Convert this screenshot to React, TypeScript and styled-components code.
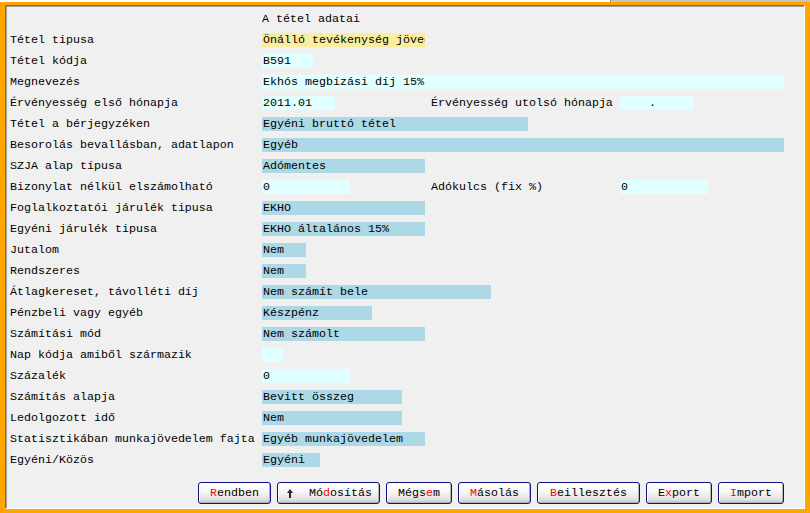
import styled, { createGlobalStyle } from "styled-components";

const GlobalStyle = createGlobalStyle`
  html, body {
    margin: 0;
    padding: 0;
    background: #ffffff;
  }
`;

const Page = styled.div`
  width: 810px;
  height: 513px;
  display: flex;
  flex-direction: column;
  overflow: hidden;
  font-family: "Liberation Mono", "Courier New", monospace;
  font-size: 11.67px;
  color: #000;
`;

const BackStrip = styled.div`
  height: 2px;
  display: flex;
  overflow: hidden;
`;

const BackTitle = styled.div`
  width: 600px;
  background: #ffffff;
  padding-left: 10px;
  line-height: 14px;
  margin-top: -12px;
  white-space: pre;
`;

const BackGray = styled.div`
  flex: 1;
  background: #c4c4c4;
  border-left: 1px solid #8a8a8a;
`;

const Window = styled.div`
  flex: 1;
  display: flex;
  border-style: solid;
  border-color: #ffa500;
  border-width: 3px 5px 4px 5px;
`;

const Panel = styled.div`
  flex: 1;
  display: flex;
  flex-direction: column;
  background: #f0f0f0;
  border-top: 1px solid #6e6e6e;
  border-left: 1px solid #6e6e6e;
  border-right: 1px solid #ffffff;
  border-bottom: 1px solid #ffffff;
  box-shadow: inset 1px 1px 0 #a0a0a0;
  padding: 2px 0 0 4px;
`;

const Row = styled.div<{ $pair?: boolean }>`
  display: grid;
  grid-template-columns: ${(p) => (p.$pair ? "252px 169px 189px 1fr" : "252px 1fr")};
  height: 21px;
  align-items: center;
  white-space: pre;
`;

const Label = styled.span`
  line-height: 14px;
`;

const tones = {
  yellow: "#f8ee9e",
  cyan: "#e0ffff",
  blue: "#add8e6",
};

const Field = styled.div<{ $w: number; $tone: keyof typeof tones }>`
  width: ${(p) => p.$w}px;
  height: 14px;
  line-height: 15px;
  padding-left: 1px;
  box-sizing: border-box;
  background: ${(p) => tones[p.$tone]};
  overflow: hidden;
  white-space: pre;
`;

const ButtonBar = styled.div`
  display: flex;
  justify-content: flex-end;
  gap: 6px;
  padding-right: 20px;
  margin-top: 12px;
`;

const Button = styled.button<{ $w: number; $icon?: boolean }>`
  width: ${(p) => p.$w}px;
  height: 22px;
  box-sizing: border-box;
  display: flex;
  align-items: center;
  justify-content: ${(p) => (p.$icon ? "flex-start" : "center")};
  gap: 16px;
  padding: 0 0 0 ${(p) => (p.$icon ? 9 : 0)}px;
  border: 1px solid #101080;
  border-radius: 3px;
  background: linear-gradient(#ffffff 0%, #f6f6f6 45%, #e2e2e2 80%, #c6c6c6 100%);
  box-shadow: inset 1px 1px 0 #ffffff, inset -1px -1px 0 #b4b4b4;
  font-family: "Liberation Mono", "Courier New", monospace;
  font-size: 11.67px;
  color: #000;
  white-space: pre;
`;

const Hot = styled.span`
  color: #ff0000;
`;

type Tone = keyof typeof tones;
type F = { text: string; w: number; tone: Tone };
type RowData = { label: string; field: F; right?: { label: string; field: F } };

const rows: RowData[] = [
  { label: "Tétel tipusa", field: { text: "Önálló tevékenység jövedelme", w: 163, tone: "yellow" } },
  { label: "Tétel kódja", field: { text: "B591", w: 51, tone: "cyan" } },
  { label: "Megnevezés", field: { text: "Ekhós megbízási díj 15%", w: 522, tone: "cyan" } },
  {
    label: "Érvényesség első hónapja",
    field: { text: "2011.01", w: 73, tone: "cyan" },
    right: { label: "Érvényesség utolsó hónapja", field: { text: "    .", w: 73, tone: "cyan" } },
  },
  { label: "Tétel a bérjegyzéken", field: { text: "Egyéni bruttó tétel", w: 266, tone: "blue" } },
  { label: "Besorolás bevallásban, adatlapon", field: { text: "Egyéb", w: 522, tone: "blue" } },
  { label: "SZJA alap típusa", field: { text: "Adómentes", w: 163, tone: "blue" } },
  {
    label: "Bizonylat nélkül elszámolható",
    field: { text: "0", w: 88, tone: "cyan" },
    right: { label: "Adókulcs (fix %)", field: { text: "0", w: 88, tone: "cyan" } },
  },
  { label: "Foglalkoztatói járulék tipusa", field: { text: "EKHO", w: 163, tone: "blue" } },
  { label: "Egyéni járulék tipusa", field: { text: "EKHO általános 15%", w: 163, tone: "blue" } },
  { label: "Jutalom", field: { text: "Nem", w: 44, tone: "blue" } },
  { label: "Rendszeres", field: { text: "Nem", w: 44, tone: "blue" } },
  { label: "Átlagkereset, távolléti díj", field: { text: "Nem számít bele", w: 229, tone: "blue" } },
  { label: "Pénzbeli vagy egyéb", field: { text: "Készpénz", w: 110, tone: "blue" } },
  { label: "Számítási mód", field: { text: "Nem számolt", w: 163, tone: "blue" } },
  { label: "Nap kódja amiből származik", field: { text: "", w: 21, tone: "cyan" } },
  { label: "Százalék", field: { text: "0", w: 88, tone: "cyan" } },
  { label: "Számítás alapja", field: { text: "Bevitt összeg", w: 140, tone: "blue" } },
  { label: "Ledolgozott idő", field: { text: "Nem", w: 140, tone: "blue" } },
  { label: "Statisztikában munkajövedelem fajta", field: { text: "Egyéb munkajövedelem", w: 163, tone: "blue" } },
  { label: "Egyéni/Közös", field: { text: "Egyéni", w: 58, tone: "blue" } },
];

const buttons = [
  { w: 73, pre: "", hot: "R", post: "endben" },
  { w: 103, pre: "Mó", hot: "d", post: "osítás", icon: true },
  { w: 66, pre: "Mégs", hot: "e", post: "m" },
  { w: 73, pre: "", hot: "M", post: "ásolás" },
  { w: 103, pre: "", hot: "B", post: "eillesztés" },
  { w: 66, pre: "E", hot: "x", post: "port" },
  { w: 66, pre: "", hot: "I", post: "mport" },
];

function UpArrow() {
  return (
    <svg width="6" height="9" viewBox="0 0 6 9">
      <path d="M3 0 L6 4 L4 4 L4 9 L2 9 L2 4 L0 4 Z" fill="#2a2a2a" />
    </svg>
  );
}

export default function App() {
  return (
    <Page>
      <GlobalStyle />
      <BackStrip>
        <BackTitle>B/20  Tétel adatai - Munkabér számfejtés, tételek karbantartása</BackTitle>
        <BackGray />
      </BackStrip>
      <Window>
        <Panel>
          <Row>
            <Label />
            <Label>A tétel adatai</Label>
          </Row>
          {rows.map((r) => (
            <Row key={r.label} $pair={!!r.right}>
              <Label>{r.label}</Label>
              <Field $w={r.field.w} $tone={r.field.tone}>{r.field.text}</Field>
              {r.right && (
                <>
                  <Label>{r.right.label}</Label>
                  <Field $w={r.right.field.w} $tone={r.right.field.tone}>{r.right.field.text}</Field>
                </>
              )}
            </Row>
          ))}
          <ButtonBar>
            {buttons.map((b) => (
              <Button key={b.pre + b.hot + b.post} $w={b.w} $icon={b.icon}>
                {b.icon && <UpArrow />}
                <span>
                  {b.pre}
                  <Hot>{b.hot}</Hot>
                  {b.post}
                </span>
              </Button>
            ))}
          </ButtonBar>
        </Panel>
      </Window>
    </Page>
  );
}
